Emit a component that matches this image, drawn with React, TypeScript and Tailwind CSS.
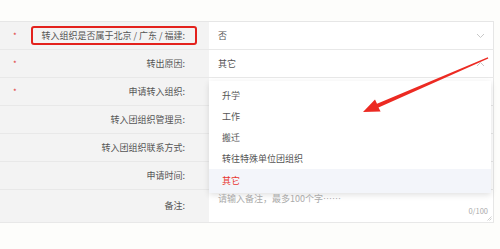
import React from "react";

type Row = {
  label: string;
  required?: boolean;
  value?: string;
  chevron?: "down" | "up";
  highlight?: boolean;
  tall?: boolean;
};

const rows: Row[] = [
  { label: "转入组织是否属于北京 / 广东 / 福建:", required: true, value: "否", chevron: "down", highlight: true },
  { label: "转出原因:", required: true, value: "其它", chevron: "up" },
  { label: "申请转入组织:", required: true },
  { label: "转入团组织管理员:" },
  { label: "转入团组织联系方式:" },
  { label: "申请时间:" },
  { label: "备注:", tall: true },
];

const options = ["升学", "工作", "搬迁", "转往特殊单位团组织"];

function Chevron({ dir }: { dir: "down" | "up" }) {
  return (
    <svg width="9" height="6" viewBox="0 0 9 6" className="text-[#c8c8c8]">
      <path
        d={dir === "down" ? "M1 1 L4.5 4.5 L8 1" : "M1 5 L4.5 1.5 L8 5"}
        fill="none"
        stroke="currentColor"
        strokeWidth="1"
      />
    </svg>
  );
}

export default function App() {
  return (
    <div
      className="relative h-[249px] w-[500px] overflow-hidden bg-[#fdfdfb] pt-[21px] text-[9px] text-[#555]"
      style={{ fontFamily: '"Noto Sans CJK SC", "Noto Sans", sans-serif' }}
    >
      <div className="w-[494px] border-t border-[#e6e6e6]">
        {rows.map((row) => (
          <div
            key={row.label}
            className={`grid grid-cols-[209px_1fr] border-b border-[#e8e8e8] ${row.tall ? "h-[33px]" : "h-[28px]"}`}
          >
            <div className="relative flex items-center justify-end bg-[#f3f3f3] pr-[24px]">
              {row.required ? (
                <span className="absolute left-[13px] top-1/2 -translate-y-1/2 text-[8px] leading-none text-[#e03a3a]">*</span>
              ) : null}
              {row.highlight ? (
                <span className="flex h-[19px] items-center rounded-[3px] border-2 border-[#e3211c] pl-[8px] pr-[10px] mr-[-12px]">
                  {row.label}
                </span>
              ) : (
                <span>{row.label}</span>
              )}
            </div>
            <div className="relative flex items-center border-r border-[#e6e6e6] bg-white pl-[9px] pr-[8px]">
              {row.value ? <span>{row.value}</span> : null}
              {row.chevron ? (
                <span className="ml-auto flex items-center">
                  <Chevron dir={row.chevron} />
                </span>
              ) : null}
              {row.tall ? (
                <>
                  <span className="absolute bottom-[6px] right-[5px] text-[7.5px] text-[#aaa]">0/100</span>
                  <svg width="5" height="5" viewBox="0 0 5 5" className="absolute bottom-[1px] right-[1px]">
                    <path d="M0.5 4.5 L4.5 0.5 M2.5 4.5 L4.5 2.5" stroke="#bbb" strokeWidth="0.7" />
                  </svg>
                </>
              ) : null}
            </div>
          </div>
        ))}
      </div>

      {/* dropdown menu */}
      <div className="absolute left-[209px] top-[81px] w-[282px] bg-white pt-[4px] shadow-[0_2px_6px_rgba(0,0,0,0.12)]">
        {options.map((o) => (
          <div key={o} className="flex h-[21px] items-center pl-[13px] text-[#555]">
            {o}
          </div>
        ))}
        <div className="flex h-[24px] items-center bg-[#f3f5fa] pl-[13px] text-[#e8372f]">其它</div>
      </div>

      {/* placeholder sits below menu in remark row */}
      <div className="absolute left-[218px] top-[192px] text-[#aaa]">请输入备注，最多100个字……</div>

      {/* annotation arrow */}
      <svg className="pointer-events-none absolute left-0 top-0" width="500" height="249" viewBox="0 0 500 249">
        <polygon
          points="487.8,57.3 377.0,103.8 375.0,99.6 363,112 380.6,111.4 378.5,107.4 488.3,58.6"
          fill="#ec2a22"
        />
      </svg>
    </div>
  );
}
